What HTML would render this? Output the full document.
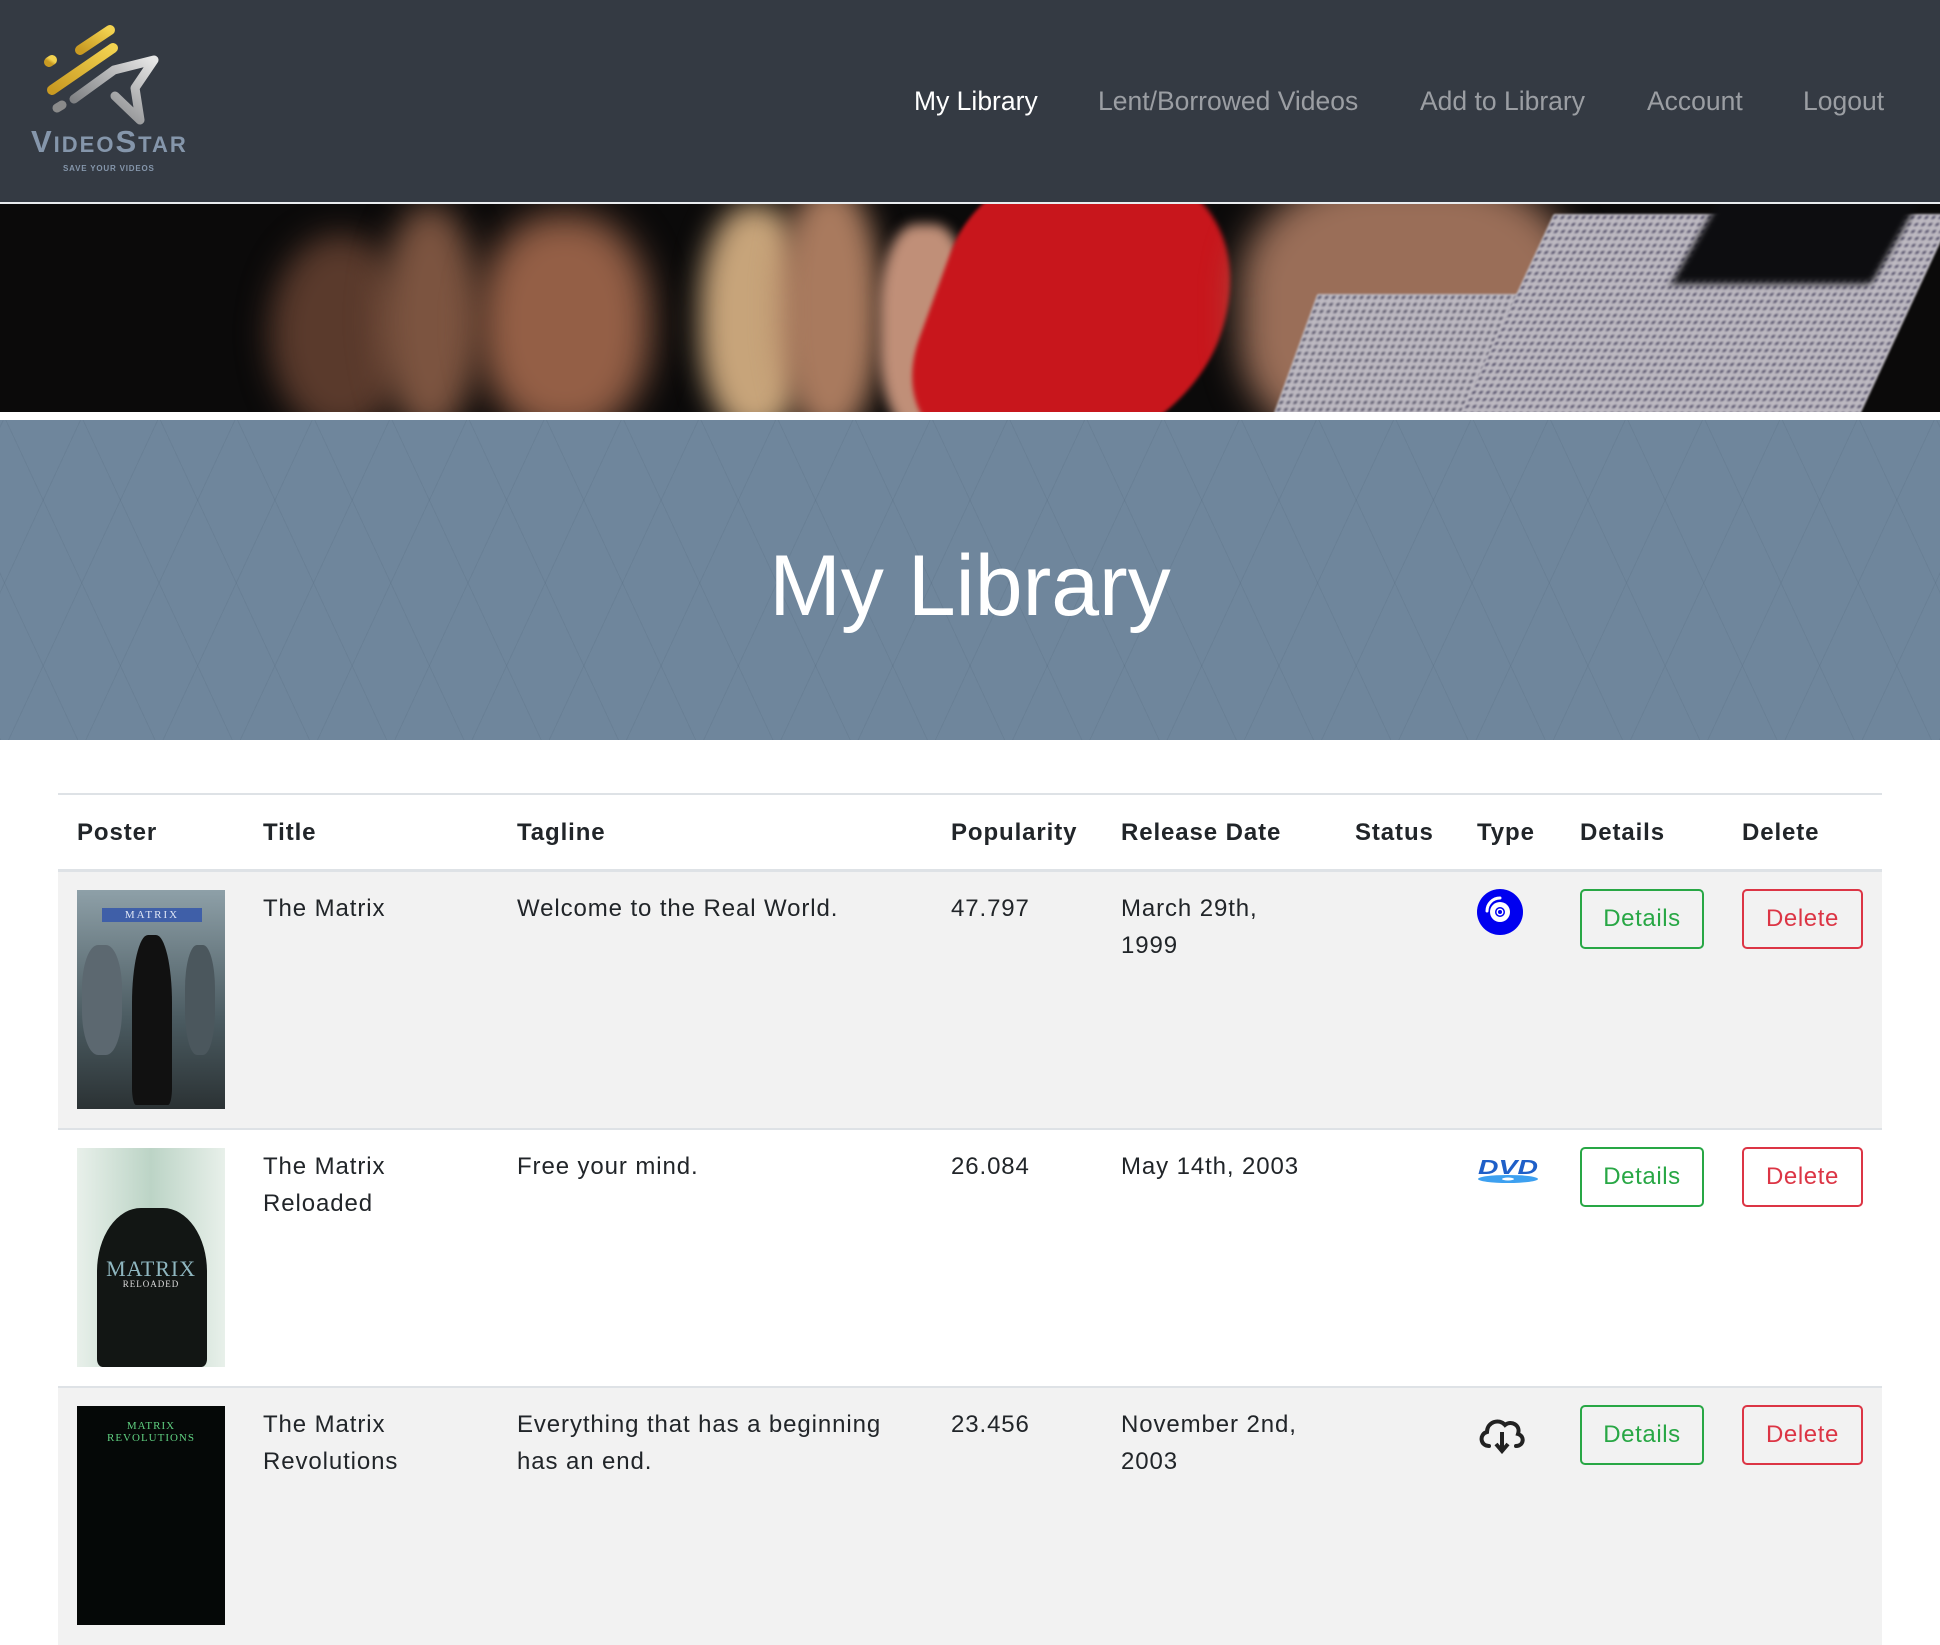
<!DOCTYPE html>
<html><head><meta charset="utf-8">
<style>
*{box-sizing:border-box;margin:0;padding:0}
body{width:1940px;height:1455px;overflow:hidden;background:#fff;font-family:"Liberation Sans",sans-serif;color:#212529;position:relative}
.nav{position:absolute;left:0;top:0;width:1940px;height:202px;background:#343a43}
.nav a{position:absolute;top:86px;font-size:26.5px;color:#9b9ea3;text-decoration:none;white-space:nowrap}
.nav a.act{color:#fff}
.line{position:absolute;top:202px;left:0;width:1940px;height:2px;background:#e9ecef}
.hero{position:absolute;top:204px;left:0;width:1940px;height:208px;background:#0b0a0a;overflow:hidden}
.hero div{position:absolute}
.banner{position:absolute;top:420px;left:0;width:1940px;height:320px;background:#6f869c;
background-image:repeating-linear-gradient(65deg,rgba(60,80,100,.12) 0 1px,transparent 1px 70px),repeating-linear-gradient(-65deg,rgba(60,80,100,.12) 0 1px,transparent 1px 70px)}
.banner h1{position:absolute;left:0;width:1940px;top:111px;text-align:center;color:#fff;font-weight:400;font-size:86px;line-height:110px}
table{position:absolute;left:58px;top:793px;width:1824px;border-collapse:collapse;table-layout:fixed;font-size:24px;line-height:37px;letter-spacing:.9px}
th{text-align:left;font-weight:700;padding:19px 0 18px 19px;border-top:2px solid #dee2e6;border-bottom:3px solid #dee2e6;white-space:nowrap}
td{vertical-align:top;padding:18px 0 18px 19px;border-top:2px solid #dee2e6}
tr.s td{background:#f2f2f2}
.btn{display:inline-block;height:60px;line-height:56px;border:2px solid;border-radius:5px;font-size:24px;text-align:center;margin-top:-1px;letter-spacing:.6px}
.bd{color:#28a745;border-color:#28a745;width:124px}
.bx{color:#dc3545;border-color:#dc3545;width:121px}
.poster{width:148px;height:219px;position:relative;overflow:hidden}
</style></head><body>
<div class="nav">
 <svg style="position:absolute;left:40px;top:20px" width="130" height="110" viewBox="0 0 130 110">
  <defs><linearGradient id="g" x1="0" y1="1" x2="1" y2="0"><stop offset="0" stop-color="#c99a22"/><stop offset="1" stop-color="#f2d250"/></linearGradient>
  <linearGradient id="s" x1="0" y1="1" x2="1" y2="0"><stop offset="0" stop-color="#6d6f72"/><stop offset="1" stop-color="#e6e6e6"/></linearGradient></defs>
  <g stroke-linecap="round" fill="none">
   <line x1="9" y1="42" x2="12" y2="40" stroke="url(#g)" stroke-width="10"/>
   <line x1="40" y1="30" x2="70" y2="10" stroke="url(#g)" stroke-width="10"/>
   <line x1="12" y1="70" x2="73" y2="28" stroke="url(#g)" stroke-width="10"/>
   <line x1="17" y1="88" x2="22" y2="85" stroke="#8a8a8a" stroke-width="9"/>
   <path d="M34 79 L74 50 L114 40 L95 68 L100 100 L75 76" stroke="url(#s)" stroke-width="9" stroke-linejoin="round"/>
  </g>
 </svg>
 <div style="position:absolute;left:31px;top:124px;font-size:31px;letter-spacing:2px;color:#8596ab;font-weight:700;font-variant:small-caps;">VideoStar</div>
 <div style="position:absolute;left:63px;top:164px;font-size:8px;letter-spacing:.8px;color:#8596ab;font-weight:700">SAVE YOUR VIDEOS</div>
 <a class="act" style="left:914px">My Library</a>
 <a style="left:1098px">Lent/Borrowed Videos</a>
 <a style="left:1420px">Add to Library</a>
 <a style="left:1647px">Account</a>
 <a style="left:1803px">Logout</a>
</div>
<div class="line"></div>
<div class="hero">
 <div style="left:270px;top:30px;width:140px;height:200px;border-radius:50%;background:#5a3a2c;filter:blur(16px)"></div>
 <div style="left:380px;top:0;width:100px;height:230px;border-radius:50%;background:#7c5440;filter:blur(16px)"></div>
 <div style="left:480px;top:10px;width:170px;height:220px;border-radius:45%;background:#945f46;filter:blur(18px)"></div>
 <div style="left:700px;top:0;width:110px;height:230px;border-radius:45%;background:#c7a47a;filter:blur(14px)"></div>
 <div style="left:780px;top:-20px;width:100px;height:250px;border-radius:45%;background:#a97a5e;filter:blur(14px)"></div>
 <div style="left:880px;top:20px;width:90px;height:210px;border-radius:40%;background:#c08f78;filter:blur(6px)"></div>
 <div style="left:930px;top:-40px;width:300px;height:290px;background:#c8161c;border-radius:30% 60% 40% 40%;transform:skewX(-20deg);filter:blur(2px)"></div>
 <div style="left:1240px;top:-30px;width:340px;height:280px;border-radius:40%;background:#9a6e58;filter:blur(18px)"></div>
 <div style="left:1290px;top:90px;width:300px;height:150px;background-color:#bdb9c1;background-image:radial-gradient(#59566a 1.5px,transparent 2px);background-size:7px 7px;transform:skewX(-20deg);filter:blur(1px)"></div>
 <div style="left:1500px;top:10px;width:400px;height:230px;background-color:#bdb9c1;background-image:radial-gradient(#55516a 1.5px,transparent 2px);background-size:7px 7px;transform:skewX(-25deg);filter:blur(1px)"></div>
 <div style="left:1700px;top:-20px;width:200px;height:100px;background:#0d0d10;transform:skewX(-30deg);filter:blur(4px)"></div>
</div>
<div class="banner"><h1>My Library</h1></div>
<table>
<colgroup><col style="width:186px"><col style="width:254px"><col style="width:434px"><col style="width:170px"><col style="width:234px"><col style="width:122px"><col style="width:103px"><col style="width:162px"><col style="width:159px"></colgroup>
<tr><th>Poster</th><th>Title</th><th>Tagline</th><th>Popularity</th><th>Release Date</th><th>Status</th><th>Type</th><th>Details</th><th>Delete</th></tr>
<tr class="s" style="height:258px"><td><div class="poster" style="background:linear-gradient(#8ea0a8,#4a5a60 60%,#2b3234)"><div style="position:absolute;left:25px;top:18px;width:100px;height:14px;background:#3f5fa8;color:#dfe6f5;font:11px 'Liberation Serif',serif;text-align:center;line-height:14px;letter-spacing:2px">MATRIX</div><div style="position:absolute;left:55px;top:45px;width:40px;height:170px;background:#111;border-radius:40% 40% 10% 10%"></div><div style="position:absolute;left:5px;top:55px;width:40px;height:110px;background:#5c6870;border-radius:40%"></div><div style="position:absolute;left:108px;top:55px;width:30px;height:110px;background:#4b575d;border-radius:40%"></div></div></td>
<td>The Matrix</td><td>Welcome to the Real World.</td><td>47.797</td><td>March 29th,<br>1999</td><td></td>
<td><svg width="48" height="48" viewBox="0 0 48 48" style="margin-top:-1px"><circle cx="23" cy="23" r="23" fill="#0000f0"/><circle cx="23" cy="23" r="10" fill="#fff"/><circle cx="23" cy="23" r="5" fill="#0000f0"/><circle cx="23" cy="23" r="3.5" fill="#fff"/><circle cx="23" cy="23" r="2" fill="#0000f0"/><path d="M10 22 A13 13 0 0 1 23 9" stroke="#fff" stroke-width="3" fill="none" stroke-linecap="round"/></svg></td>
<td><span class="btn bd">Details</span></td><td><span class="btn bx">Delete</span></td></tr>
<tr style="height:258px"><td><div class="poster" style="background:linear-gradient(90deg,#e8f0ea,#bcd4c6 50%,#e8f0ea)"><div style="position:absolute;left:20px;top:60px;width:110px;height:159px;background:#121614;border-radius:40% 40% 5% 5%"></div><div style="position:absolute;left:0;top:108px;width:148px;text-align:center;font:22px 'Liberation Serif',serif;color:#8fb7c0">MATRIX</div><div style="position:absolute;left:0;top:131px;width:148px;text-align:center;font:9px 'Liberation Serif',serif;color:#ddd;letter-spacing:1px">RELOADED</div></div></td>
<td>The Matrix<br>Reloaded</td><td>Free your mind.</td><td>26.084</td><td>May 14th, 2003</td><td></td>
<td><svg width="64" height="30" viewBox="0 0 64 30" style="margin-top:8px"><text x="1" y="18" font-family="Liberation Sans" font-weight="700" font-style="italic" font-size="20" fill="#1f5fc8" textLength="60" lengthAdjust="spacingAndGlyphs" letter-spacing="0">DVD</text><ellipse cx="31" cy="23" rx="30" ry="4" fill="#3da0f0"/><ellipse cx="31" cy="23" rx="6" ry="1.5" fill="#fff"/></svg></td>
<td><span class="btn bd">Details</span></td><td><span class="btn bx">Delete</span></td></tr>
<tr class="s" style="height:258px"><td><div class="poster" style="background:#050807"><div style="position:absolute;left:0;top:14px;width:148px;text-align:center;font:11px/12px 'Liberation Serif',serif;color:#5fd080;letter-spacing:1px">MATRIX<br>REVOLUTIONS</div></div></td>
<td>The Matrix<br>Revolutions</td><td>Everything that has a beginning<br>has an end.</td><td>23.456</td><td>November 2nd,<br>2003</td><td></td>
<td><svg width="50" height="40" viewBox="0 0 50 40" style="margin-top:8px"><path d="M12 32 C3 32 2 20 10 18 C10 8 22 4 28 11 C34 6 44 11 41 20 C48 22 47 32 39 32" stroke="#222" stroke-width="4" fill="none" stroke-linecap="round"/><path d="M25 18 V36 M19 30 L25 37 L31 30" stroke="#222" stroke-width="4" fill="none"/></svg></td>
<td><span class="btn bd">Details</span></td><td><span class="btn bx">Delete</span></td></tr>
</table>
</body></html>
